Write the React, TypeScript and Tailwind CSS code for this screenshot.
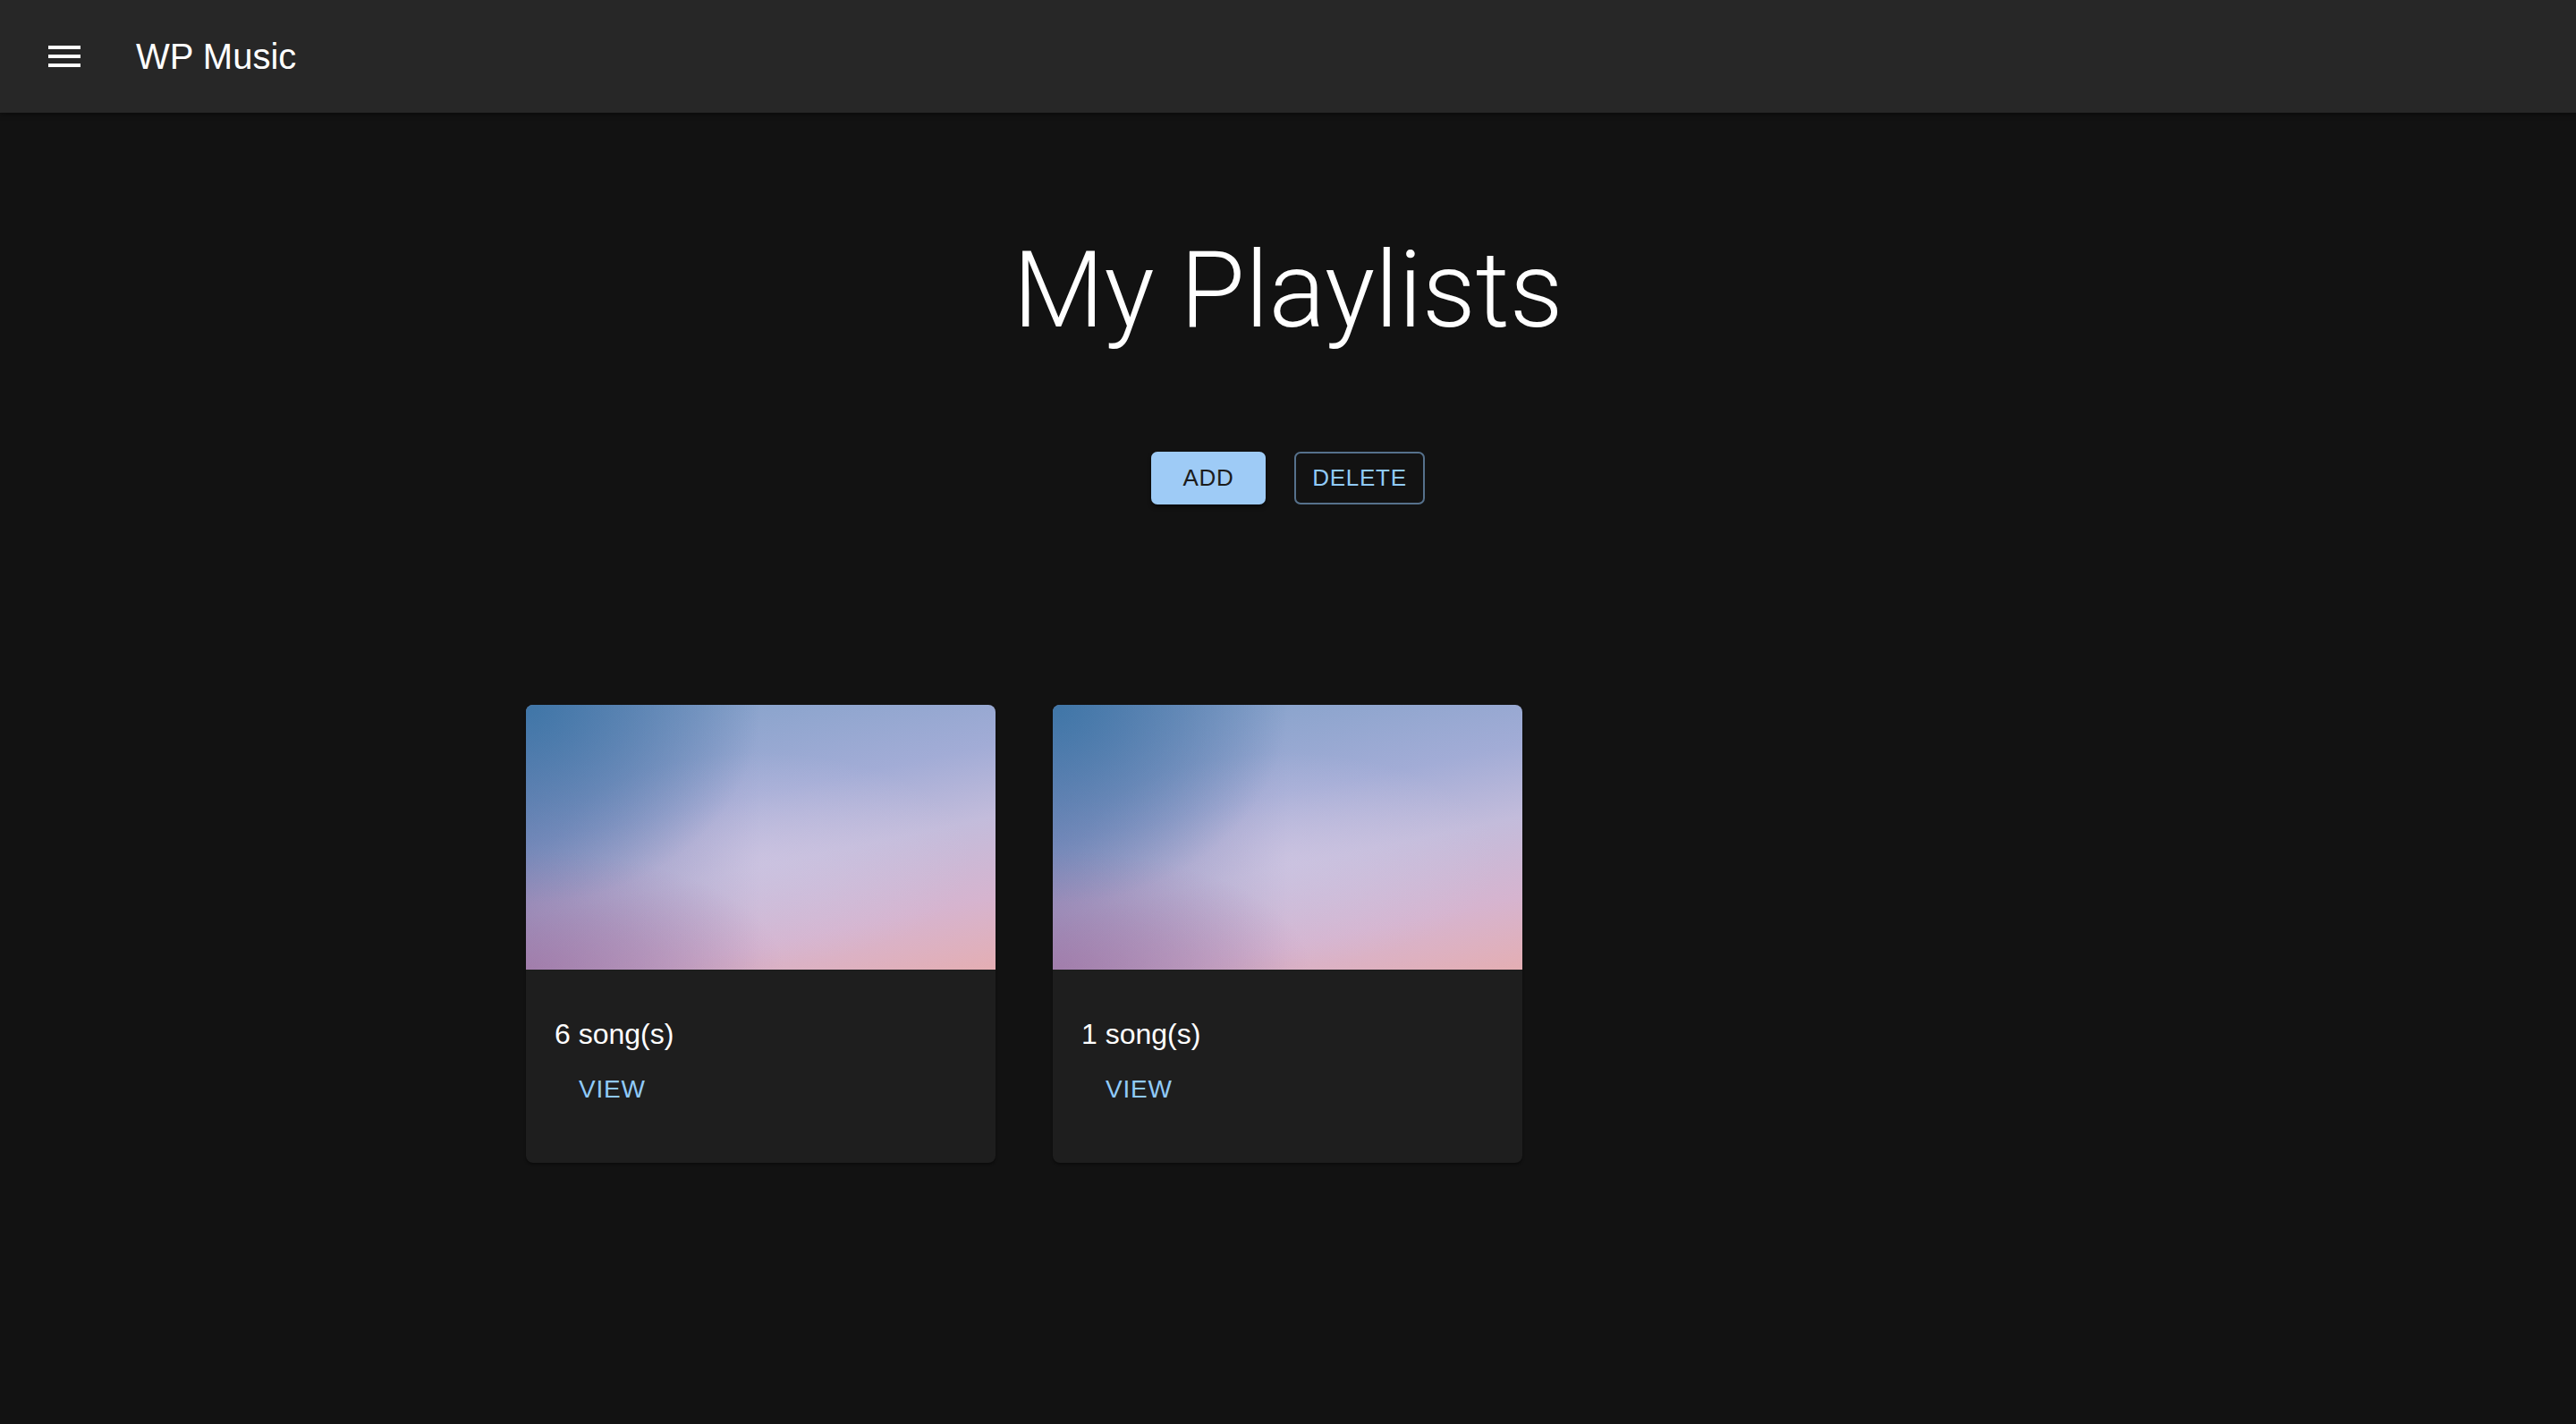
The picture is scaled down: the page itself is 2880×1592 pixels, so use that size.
import React from 'react';

const playlists = [
  { id: 1, count: 6 },
  { id: 2, count: 1 },
];

const MenuIcon: React.FC = () => (
  <svg width="48" height="48" viewBox="0 0 24 24" fill="#ffffff">
    <path d="M3 18h18v-2H3zm0-5h18v-2H3zm0-7v2h18V6z" />
  </svg>
);

const PlaylistCard: React.FC<{ count: number }> = ({ count }) => (
  <div className="w-[525px] rounded-[8px] overflow-hidden bg-[#1e1e1e] shadow-[0_2px_3px_rgba(0,0,0,0.4)]">
    <div className="h-[296px] bg-[radial-gradient(ellipse_50%_75%_at_0%_0%,rgba(55,115,165,0.85),rgba(55,115,165,0)),radial-gradient(ellipse_55%_45%_at_0%_100%,rgba(160,110,160,0.6),rgba(160,110,160,0)),linear-gradient(to_right,rgba(80,85,145,0.35),rgba(80,85,145,0)_50%),radial-gradient(ellipse_45%_40%_at_50%_58%,rgba(210,200,228,0.55),rgba(210,200,228,0)),linear-gradient(168deg,#7fa0c8_0%,#a2acd6_38%,#c3bcdb_58%,#d6b4cf_80%,#e4aeb3_100%)]" />
    <div className="pt-[48px] pb-[58px] px-[32px]">
      <p className="text-[32px] leading-[48px] text-white">{count} song(s)</p>
      <button className="mt-[13px] ml-[11px] px-[16px] text-[28px] leading-[49px] tracking-[0.8px] uppercase text-[#90caf9]">
        View
      </button>
    </div>
  </div>
);

const App: React.FC = () => {
  return (
    <div className="min-h-screen bg-[#121212] font-['Liberation_Sans',Arial,sans-serif]">
      <header className="h-[126px] bg-[#272727] flex items-center shadow-[0_2px_6px_rgba(0,0,0,0.4)]">
        <div className="ml-[48px]">
          <MenuIcon />
        </div>
        <h1 className="ml-[56px] text-[40px] text-white">WP Music</h1>
      </header>

      <main className="flex flex-col items-center">
        <h2 className="mt-[140px] text-[118px] leading-none font-light text-white font-['Roboto',sans-serif]">
          My Playlists
        </h2>

        <div className="mt-[121px] flex gap-[32px]">
          <button className="w-[128px] h-[59px] rounded-[7px] bg-[#9ecbf6] text-[#1c1c1c] text-[26px] tracking-[0.74px] uppercase shadow-[0_3px_4px_rgba(0,0,0,0.5)]">
            Add
          </button>
          <button className="w-[146px] h-[59px] rounded-[7px] border-2 border-[#56718c] text-[#90caf9] text-[26px] tracking-[0.74px] uppercase">
            Delete
          </button>
        </div>

        <div className="mt-[224px] w-[1704px] flex gap-[64px]">
          {playlists.map((p) => (
            <PlaylistCard key={p.id} count={p.count} />
          ))}
        </div>
      </main>
    </div>
  );
};

export default App;
